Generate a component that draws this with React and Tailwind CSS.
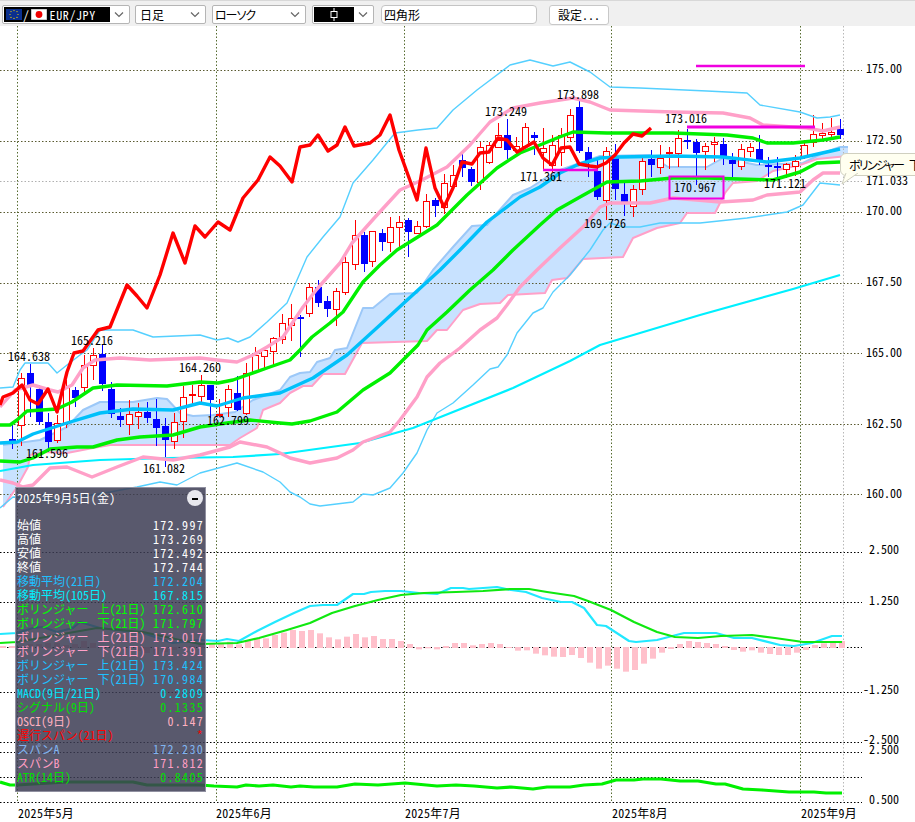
const jp = "font-['Noto_Sans_CJK_JP',sans-serif] [font-feature-settings:'hwid'] text-[12px] leading-[14px]"
const prop = "font-['Noto_Sans_CJK_JP',sans-serif] [font-feature-settings:'palt'] text-[12px] leading-[14px]"

// [x, high, bodyTop, bodyBottom, low, up?]
const candles = [
  [12,425,439,441,449,0],[21,373,378,425,446,1],[30,364,373,385,417,0],[39,385,389,421,425,0],[48,413,422,441,452,0],
  [57,415,423,440,443,1],[66,380,387,423,428,1],[75,387,390,397,407,0],[84,355,365,387,393,1],[93,348,355,365,380,1],
  [102,345,354,383,391,0],[111,382,389,413,418,0],[120,408,416,419,427,0],[129,400,414,424,435,1],[138,403,412,416,429,1],
  [147,402,412,417,423,0],[156,399,419,427,446,0],[165,418,426,439,467,0],[174,413,422,441,449,1],[183,386,397,421,438,1],
  [192,385,394,395,405,1],[201,375,385,396,402,1],[210,385,385,399,418,0],[219,399,414,415,417,1],[228,385,389,407,417,1],
  [237,376,393,409,411,0],[246,363,373,413,415,1],[255,347,355,371,373,1],[264,347,350,356,368,1],[273,337,338,351,366,1],
  [282,314,323,339,344,1],[291,304,318,325,341,1],[300,315,317,318,357,0],[309,283,287,313,317,1],[318,280,287,302,307,0],
  [327,296,301,308,317,0],[336,288,291,309,326,1],[345,257,262,292,295,1],[355,220,235,264,270,1],[364,232,235,263,272,0],
  [372,231,231,261,267,1],[382,229,233,241,251,0],[390,217,227,242,252,1],[399,216,222,227,247,1],[408,218,220,231,257,0],
  [417,221,226,233,234,1],[426,194,201,226,228,1],[435,198,200,205,217,0],[444,174,183,207,214,1],[453,165,175,186,190,1],
  [462,152,160,167,177,0],[471,167,169,181,186,0],[480,142,147,182,190,1],[489,142,145,162,164,1],[498,123,135,147,148,1],
  [507,119,135,149,159,0],[516,137,146,150,155,1],[525,123,127,146,148,1],[534,132,135,137,155,0],[543,128,148,152,170,1],
  [552,135,145,165,172,1],[561,128,135,152,166,1],[570,109,115,137,142,1],[579,101,107,150,153,0],[588,147,152,160,177,0],
  [597,160,171,196,200,0],[606,147,151,200,220,1],[615,144,158,188,200,0],[624,182,194,201,216,0],[633,185,189,206,217,1],
  [642,155,161,189,195,1],[651,150,159,164,177,0],[660,145,158,167,174,1],[669,147,152,153,169,1],[678,130,138,153,167,1],
  [687,129,140,141,149,0],[696,139,142,152,185,0],[705,143,146,151,170,1],[714,137,142,144,162,1],[723,138,144,155,165,0],
  [732,153,160,163,177,0],[741,144,149,166,170,1],[750,143,147,151,157,1],[759,135,149,159,165,0],[768,157,165,166,177,0],
  [777,157,166,167,177,0],[786,163,164,169,178,1],[795,155,161,166,176,1],[804,140,145,157,159,1],[813,115,134,142,147,1],
  [822,123,133,135,141,1],[831,118,132,134,138,1],[840,119,129,134,139,0],
]

const red = [[0,405],[3,397],[13,393],[22,385],[30,400],[38,404],[48,389],[57,412],[67,372],[74,353],[83,351],[98,330],[110,327],[127,285],[137,296],[147,308],[160,275],[173,233],[185,263],[195,226],[205,237],[218,222],[230,230],[243,198],[258,180],[270,157],[280,166],[292,182],[300,147],[310,145],[318,135],[328,151],[337,145],[345,127],[354,146],[370,143],[380,135],[390,115],[399,150],[417,200],[426,148],[435,188],[444,207],[453,188],[462,162],[472,164],[480,153],[489,152],[498,138],[507,140],[517,152],[534,142],[543,158],[552,165],[561,148],[570,147],[579,164],[590,166],[597,167],[606,163],[615,155],[624,143],[633,134],[642,136],[651,128]]
const pinkUp = [[0,407],[15,390],[33,385],[50,390],[58,392],[72,385],[83,368],[95,360],[120,358],[150,360],[200,358],[217,360],[237,362],[253,355],[267,347],[283,337],[303,307],[317,289],[340,263],[352,243],[377,215],[400,190],[420,181],[447,167],[470,145],[490,122],[513,108],[540,103],[573,98],[590,102],[610,110],[673,112],[723,113],[750,118],[763,125],[807,128],[823,131],[840,127]]
const pinkLow = [[0,480],[13,483],[23,487],[33,485],[50,468],[67,467],[92,477],[117,467],[143,457],[173,460],[200,455],[230,447],[240,442],[267,447],[280,453],[290,458],[310,463],[337,458],[353,450],[363,442],[390,432],[400,420],[417,397],[427,377],[440,363],[460,348],[480,330],[497,318],[507,305],[520,287],[537,270],[560,248],[583,227],[600,207],[610,203],[650,203],[673,198],[720,202],[753,200],[767,195],[800,192],[813,180],[823,173],[840,173]]
const greenUp = [[0,425],[10,425],[17,420],[27,411],[57,409],[72,402],[93,388],[117,385],[167,386],[200,382],[218,383],[233,380],[267,368],[290,360],[300,350],[312,337],[330,323],[343,312],[363,282],[380,265],[397,250],[437,225],[467,195],[497,168],[520,153],[540,145],[557,138],[573,132],[607,133],[673,133],[727,135],[753,138],[767,143],[793,143],[823,140],[840,137]]
const greenLow = [[0,461],[20,462],[33,458],[50,449],[77,447],[93,447],[117,440],[140,437],[173,435],[200,427],[227,423],[250,420],[280,423],[292,424],[310,421],[337,412],[363,390],[390,373],[405,358],[418,345],[427,330],[447,312],[470,290],[493,270],[513,250],[540,225],[557,210],[580,197],[607,182],[640,181],[673,178],[707,178],[773,180],[800,172],[817,163],[840,162]]
const ma21 = [[0,443],[17,442],[33,434],[67,423],[100,413],[133,409],[173,410],[200,403],[217,406],[243,398],[280,393],[313,378],[347,355],[380,325],[405,302],[440,270],[460,250],[487,222],[520,197],[540,187],[560,173],[577,165],[600,158],[620,157],[673,156],[723,157],[767,162],[800,158],[840,149]]
const ma105 = [[0,471],[33,465],[100,460],[167,458],[233,457],[280,454],[360,443],[413,428],[433,420],[513,388],[570,361],[600,345],[700,315],[793,289],[840,275]]
const bbUp3 = [[0,388],[13,387],[20,370],[25,363],[48,363],[57,373],[67,365],[80,355],[87,350],[100,330],[133,330],[153,337],[200,335],[217,340],[228,338],[238,342],[250,337],[267,322],[287,303],[307,257],[323,237],[340,217],[353,183],[373,160],[395,133],[418,130],[437,128],[453,110],[477,90],[510,65],[530,60],[553,66],[570,62],[590,72],[610,87],[640,88],[707,91],[747,93],[760,105],[800,112],[817,118],[830,117],[840,115]]
const bbLow3 = [[0,508],[13,497],[60,500],[110,492],[137,487],[160,482],[177,485],[200,473],[237,463],[263,472],[280,482],[290,492],[300,497],[310,504],[320,506],[353,502],[363,494],[373,495],[390,488],[403,473],[417,453],[427,430],[437,413],[453,403],[473,385],[490,369],[498,367],[507,355],[517,333],[533,313],[543,308],[553,292],[570,275],[590,250],[603,230],[610,223],[623,227],[640,227],[660,223],[700,223],[747,218],[787,212],[803,205],[820,183],[840,185]]
const spanA = [[3,445],[40,440],[67,427],[83,410],[100,402],[133,402],[157,398],[167,399],[180,413],[193,416],[213,415],[235,412],[253,400],[280,390],[290,377],[300,373],[310,372],[317,362],[330,358],[335,350],[347,348],[363,308],[373,308],[390,294],[417,293],[433,270],[453,247],[472,226],[487,225],[497,213],[513,195],[530,188],[547,177],[560,170],[600,156],[650,155],[668,167],[707,167],[723,158],[757,165],[803,163],[823,153],[840,147],[848,147]]
const spanB = [[3,507],[17,487],[28,467],[30,455],[45,452],[67,453],[93,448],[110,445],[230,445],[240,438],[257,428],[263,410],[280,403],[290,393],[303,386],[312,386],[323,374],[345,374],[362,343],[427,341],[437,330],[447,330],[463,310],[480,304],[500,303],[508,295],[545,293],[552,280],[567,278],[583,259],[623,257],[633,238],[657,228],[680,223],[687,213],[715,213],[725,193],[733,183],[757,181],[773,171],[800,165],[817,159],[848,156]]

// lower panels, read as [x, y] in page pixels
const macd = [[0,634],[17,633],[33,628],[43,627],[57,632],[73,628],[80,622],[100,628],[143,633],[173,643],[200,640],[218,641],[227,639],[239,641],[257,631],[275,622],[294,613],[310,606],[323,605],[337,605],[353,594],[364,594],[371,592],[385,591],[401,591],[419,593],[437,594],[451,588],[463,588],[469,589],[497,587],[511,590],[526,592],[542,598],[561,602],[572,602],[584,608],[597,625],[606,626],[629,641],[636,642],[657,640],[684,633],[716,633],[734,638],[752,638],[780,645],[794,646],[812,643],[832,636],[842,636]]
const signal = [[0,643],[17,642],[97,628],[143,632],[180,640],[200,644],[237,643],[259,638],[287,630],[310,623],[332,613],[355,606],[378,600],[401,595],[424,593],[456,592],[483,591],[511,589],[529,589],[547,592],[574,596],[588,601],[611,610],[634,622],[657,632],[675,637],[698,638],[721,636],[752,635],[775,638],[803,642],[842,642]]
const atr = [[0,782],[10,785],[17,785],[67,782],[133,782],[147,785],[200,785],[214,786],[237,787],[246,785],[259,786],[273,785],[291,787],[300,786],[314,787],[337,787],[355,784],[378,785],[405,783],[437,786],[456,785],[474,786],[497,788],[511,787],[533,789],[547,787],[570,787],[584,785],[602,784],[616,780],[634,780],[643,779],[661,779],[680,781],[698,781],[716,784],[725,784],[743,789],[762,790],[789,792],[814,792],[826,793],[842,793]]
const histTop = [222,220,215,223,210,205,205,195,188,180,183,180,190,202,208,200,192,202,198,207,207,213,222,235,232,235,228,219,219,226,222,219,222,231,239,238,248,253,257,258,252,261,275,293,284,293,302,297,278,263,245,234,222,213,216,219,222,228,237,242,238,245,249,252,252,245,237,225,220,219,213]
const histLeft = [[3,646],[12,646],[30,644],[39,644],[48,643],[57,643],[66,645],[75,644],[84,641],[93,643],[102,646],[120,647],[138,650],[147,652],[156,653],[165,651],[174,649],[183,647],[192,646],[201,645]]

const priceGrid = [70, 141, 212, 283, 353, 424, 494]
const lowerGrid = [552, 602, 647, 692, 742, 752, 777, 802]
const monthX = [17, 216, 404, 611, 800]

const axis = [
  ['175.00',866,73],['172.50',866,144],['171.033',866,185],['170.00',866,215],['167.50',866,286],['165.00',866,357],['162.50',866,428],['160.00',866,498],
  ['2.500',869,554],['1.250',869,605],['-1.250',863,694],['-2.500',863,744],['2.500',869,754],['0.500',869,804],
]
const tags = [
  ['164.638',8,361],['165.216',71,345],['164.260',179,372],['162.799',207,425],['161.596',26,458],['161.082',143,473],
  ['173.249',485,116],['173.898',557,99],['173.016',665,123],['171.361',520,181],['169.726',584,228],['171.121',764,188],['170.967',674,192],
]
const months = [['2025年5月',18],['2025年6月',216],['2025年7月',405],['2025年8月',612],['2025年9月',801]]

const rows = [
  ['始値','172.997','text-white'],['高値','173.269','text-white'],['安値','172.492','text-white'],['終値','172.744','text-white'],
  ['移動平均(21日)','172.204','text-[#20c0ff]'],['移動平均(105日)','167.815','text-[#00f0ff]'],
  ['ボリンジャー 上(21日)','172.610','text-[#00ff00]'],['ボリンジャー 下(21日)','171.797','text-[#00ff00]'],
  ['ボリンジャー 上(21日)','173.017','text-[#ffa0c8]'],['ボリンジャー 下(21日)','171.391','text-[#ffa0c8]'],
  ['ボリンジャー 上(21日)','173.424','text-[#20c0ff]'],['ボリンジャー 下(21日)','170.984','text-[#20c0ff]'],
  ['MACD(9日/21日)','0.2809','text-[#00e8ff]'],['シグナル(9日)','0.1335','text-[#00e000]'],['OSCI(9日)','0.147','text-[#ffb0c0]'],
  ['遅行スパン(21日)','*','text-[#ff0000]'],['スパンA','172.230','text-[#80b4f0]'],['スパンB','171.812','text-[#ff9ec4]'],['ATR(14日)','0.8405','text-[#00e000]'],
]

const pts = (a) => a.map((p) => p.join(',')).join(' ')

function Line({ data, color, width }) {
  return <polyline points={pts(data)} fill="none" stroke={color} strokeWidth={width} strokeLinejoin="round" />
}

function Chevron() {
  return (
    <svg width="12" height="8" viewBox="0 0 12 8" className="shrink-0 mx-auto">
      <path d="M2 1.5 6 5.5 10 1.5" fill="none" stroke="#666" strokeWidth="1.2" />
    </svg>
  )
}

function Select({ className, children }) {
  return (
    <div className={`flex items-stretch h-[19px] bg-white border border-[#b5b5b5] rounded-[2px] p-[1px] ${className}`}>
      {children}
      <div className="flex-1 flex items-center min-w-[18px]"><Chevron /></div>
    </div>
  )
}

function Chart() {
  return (
    <svg viewBox="0 26 915 796" width="915" height="796" className="block">
      <polygon points={pts([...spanA, ...[...spanB].reverse()])} fill="#c8e2ff" />
      {priceGrid.map((y) => (
        <line key={y} x1="0" x2="862" y1={y + 0.5} y2={y + 0.5} stroke="#5a5a30" strokeDasharray="1.5 2" />
      ))}
      <line x1="0" x2="862" y1="181.5" y2="181.5" stroke="#b0b0b0" strokeDasharray="1.5 2" />
      {lowerGrid.map((y) => (
        <line key={y} x1="0" x2="862" y1={y + 0.5} y2={y + 0.5} stroke="#000" strokeDasharray="1.5 2" />
      ))}
      {monthX.map((x) => (
        <line key={x} x1={x + 0.5} x2={x + 0.5} y1="26" y2="802" stroke="#556b2f" strokeDasharray="1.5 2" />
      ))}
      <line x1="843.5" x2="843.5" y1="26" y2="802" stroke="#b8b8b8" strokeDasharray="1.5 2" />

      <Line data={spanA} color="#9cc8f8" width={2} />
      <Line data={spanB} color="#ffa0c8" width={2} />

      {histLeft.map(([x, y]) => (
        <rect key={x} x={x - 3} y={Math.min(y, 647)} width="6" height={Math.abs(y - 647) + 1} fill="#ffc0cb" />
      ))}
      {histTop.map((v, i) => {
        const y = 570 + v / 3
        return <rect key={i} x={209 + i * 9} y={Math.min(y, 647)} width="6" height={Math.abs(y - 647) + 1} fill="#ffc0cb" />
      })}

      {candles.map(([x, hi, top, bottom, lo, up]) => (
        <g key={x} shapeRendering="crispEdges">
          <line x1={x + 0.5} x2={x + 0.5} y1={hi} y2={lo} stroke={up ? '#ff0000' : '#0000ff'} strokeWidth="1.5" />
          <rect x={x - 2.5} y={top + 0.5} width="6" height={Math.max(bottom - top, 1)} fill={up ? '#fff' : '#0000ff'} stroke={up ? '#ff0000' : '#0000ff'} strokeWidth="1.2" />
        </g>
      ))}

      <Line data={bbUp3} color="#55d0ff" width={1.4} />
      <Line data={bbLow3} color="#55d0ff" width={1.4} />
      <Line data={ma105} color="#00f0ff" width={2.2} />
      <Line data={pinkUp} color="#ffa0c8" width={3.4} />
      <Line data={pinkLow} color="#ffa0c8" width={3.4} />
      <Line data={greenUp} color="#00f000" width={3.4} />
      <Line data={greenLow} color="#00f000" width={3.4} />
      <Line data={ma21} color="#00c0fa" width={3.4} />
      <Line data={red} color="#ff0000" width={3.4} />

      <Line data={macd} color="#22e8ff" width={2.2} />
      <Line data={signal} color="#10e810" width={2.2} />
      <Line data={atr} color="#00f000" width={3.2} />

      <line x1="696" x2="805" y1="66" y2="66" stroke="#f000e0" strokeWidth="2.5" />
      <line x1="687" x2="815" y1="127" y2="127" stroke="#f000e0" strokeWidth="3" />
      <line x1="543" x2="598" y1="170" y2="170" stroke="#f000e0" strokeWidth="2.5" />
      <rect x="669.5" y="176.5" width="54" height="22" fill="none" stroke="#f000e0" strokeWidth="2" />

      <g className={jp}>
        {[...axis, ...tags].map(([t, x, y]) => (
          <text key={t + x} x={x} y={y} fill="#000">{t}</text>
        ))}
        {months.map(([t, x]) => (
          <text key={x} x={x} y={818} fill="#000" className="tracking-[0.3px]">{t}</text>
        ))}
      </g>
    </svg>
  )
}

export default function App() {
  return (
    <div className="w-[915px] h-[822px] bg-white overflow-hidden">
      <div className={`h-[26px] bg-[#f0f0f0] border-t border-[#d8d8d8] flex items-start pt-[4px] pl-[2px] ${jp}`}>
        <Select className="w-[128px]">
          <div className="w-[108px] bg-black text-white flex items-center pl-[2px] tracking-[0.6px]">
            <svg width="16" height="11" viewBox="0 0 16 11" className="shrink-0">
              <rect width="16" height="11" fill="#0a2f8f" />
              <g fill="#ffd800">
                <circle cx="8" cy="1.6" r=".6" /><circle cx="11" cy="2.6" r=".6" /><circle cx="12" cy="5.5" r=".6" /><circle cx="11" cy="8.4" r=".6" />
                <circle cx="8" cy="9.4" r=".6" /><circle cx="5" cy="8.4" r=".6" /><circle cx="4" cy="5.5" r=".6" /><circle cx="5" cy="2.6" r=".6" />
              </g>
            </svg>
            <span className="mx-[1px]">/</span>
            <svg width="16" height="11" viewBox="0 0 16 11" className="shrink-0 mr-[3px]">
              <rect width="16" height="11" fill="#fff" stroke="#999" strokeWidth="1" />
              <circle cx="8" cy="5.5" r="3.4" fill="#f00000" />
            </svg>
            EUR/JPY
          </div>
        </Select>
        <Select className="w-[71px] ml-[5px]">
          <div className="w-[50px] pl-[3px] flex items-center">日足</div>
        </Select>
        <Select className="w-[94px] ml-[6px]">
          <div className={`w-[72px] pl-[1px] flex items-center tracking-[-1px] ${prop}`}>ローソク</div>
        </Select>
        <Select className="w-[62px] ml-[6px]">
          <div className="w-[42px] bg-black flex items-center justify-center">
            <svg width="8" height="13" viewBox="0 0 8 13">
              <path d="M4 0v3M4 10v3" stroke="#fff" strokeWidth="1" />
              <rect x="1" y="3.5" width="6" height="6" fill="none" stroke="#fff" strokeWidth="1" />
            </svg>
          </div>
        </Select>
        <div className="w-[156px] h-[19px] ml-[7px] bg-white border border-[#c4c4c4] rounded-[4px] pl-[2px] flex items-center">四角形</div>
        <button className="w-[60px] h-[20px] ml-[12px] bg-white border border-[#c8c8c8] rounded-[3px] flex items-center justify-center">設定...</button>
      </div>

      <div className="relative">
        <Chart />

        <div className={`absolute left-[15px] top-[461px] w-[191px] h-[305px] bg-[#3c3c54]/85 border border-[#9090a0] ${jp}`}>
          <div className="flex items-center justify-between h-[19px] pl-[1px] pr-[2px] text-white tracking-[0.2px]">
            2025年9月5日(金)
            <span className="w-[16px] h-[16px] rounded-full bg-[#e8e8ee] flex items-center justify-center">
              <span className="w-[6px] h-[2px] bg-black mt-[2px]" />
            </span>
          </div>
          <div className="pt-[11px] pl-[1px] pr-[1px]">
            {rows.map(([label, value, color], i) => (
              <div key={i} className={`flex justify-between h-[14px] ${color}`}>
                <span className="flex gap-[9px]">
                  {label.split(' ').map((part) => <span key={part}>{part}</span>)}
                </span>
                <span className="tracking-[1.3px]">{value}</span>
              </div>
            ))}
          </div>
        </div>

        <div className={`absolute left-[840px] top-[127px] w-[90px] h-[23px] bg-[#fffff0] border border-[#d0d0c0] rounded-[6px] pl-[8px] flex items-center gap-[6px] whitespace-nowrap ${prop}`}>
          <span className="tracking-[-1.8px]">ボリンジャー</span>
          <span>下</span>
        </div>
        <svg width="20" height="14" viewBox="0 0 20 14" className="absolute left-[840px] top-[146px]">
          <path d="M6 1 2 12 18 1" fill="#fffff0" stroke="#d0d0c0" strokeWidth="1" />
          <path d="M6 0H18V1H6Z" fill="#fffff0" />
        </svg>
      </div>
    </div>
  )
}
